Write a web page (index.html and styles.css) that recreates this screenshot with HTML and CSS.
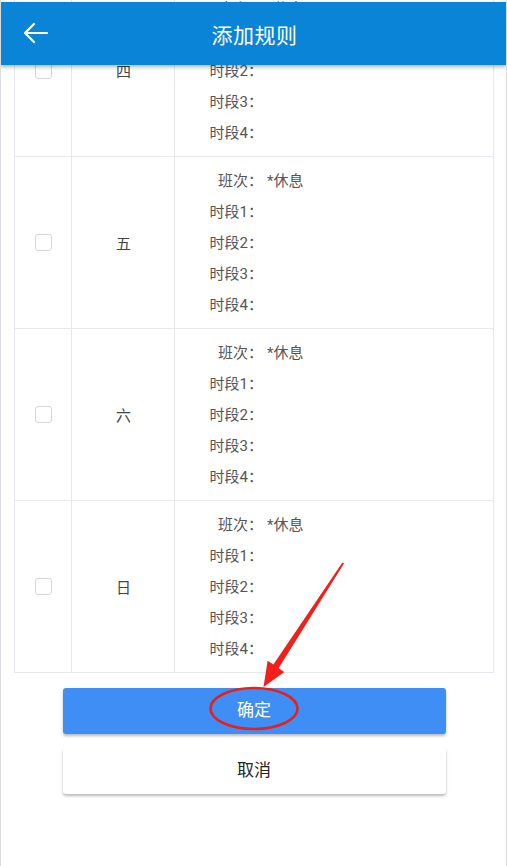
FILE: index.html
```html
<!DOCTYPE html>
<html lang="zh">
<head>
<meta charset="utf-8">
<title>添加规则</title>
<link rel="stylesheet" href="styles.css">
</head>
<body>
<div class="page">
  <header class="appbar">
    <svg class="back" width="26" height="22" viewBox="0 0 26 22"><path d="M24 11H3M11 2L2 11l9 9" fill="none" stroke="#fff" stroke-width="2.2" stroke-linecap="round" stroke-linejoin="round"/></svg>
    <h1 class="title">添加规则</h1>
  </header>
  <main class="content">
    <div class="table">
      <div class="row">
        <div class="cell check"><span class="box"></span></div>
        <div class="cell day">四</div>
        <div class="cell info">
          <div class="line"><span class="label">班次：</span><span class="val">*休息</span></div>
          <div class="line"><span class="label">时段1：</span></div>
          <div class="line"><span class="label">时段2：</span></div>
          <div class="line"><span class="label">时段3：</span></div>
          <div class="line"><span class="label">时段4：</span></div>
        </div>
      </div>
      <div class="row">
        <div class="cell check"><span class="box"></span></div>
        <div class="cell day">五</div>
        <div class="cell info">
          <div class="line"><span class="label">班次：</span><span class="val">*休息</span></div>
          <div class="line"><span class="label">时段1：</span></div>
          <div class="line"><span class="label">时段2：</span></div>
          <div class="line"><span class="label">时段3：</span></div>
          <div class="line"><span class="label">时段4：</span></div>
        </div>
      </div>
      <div class="row">
        <div class="cell check"><span class="box"></span></div>
        <div class="cell day">六</div>
        <div class="cell info">
          <div class="line"><span class="label">班次：</span><span class="val">*休息</span></div>
          <div class="line"><span class="label">时段1：</span></div>
          <div class="line"><span class="label">时段2：</span></div>
          <div class="line"><span class="label">时段3：</span></div>
          <div class="line"><span class="label">时段4：</span></div>
        </div>
      </div>
      <div class="row">
        <div class="cell check"><span class="box"></span></div>
        <div class="cell day">日</div>
        <div class="cell info">
          <div class="line"><span class="label">班次：</span><span class="val">*休息</span></div>
          <div class="line"><span class="label">时段1：</span></div>
          <div class="line"><span class="label">时段2：</span></div>
          <div class="line"><span class="label">时段3：</span></div>
          <div class="line"><span class="label">时段4：</span></div>
        </div>
      </div>
    </div>
    <div class="actions">
      <button class="btn primary">确定</button>
      <button class="btn plain">取消</button>
    </div>
  </main>
  <svg class="annot" width="507" height="866" viewBox="0 0 507 866">
    <polygon points="263.5,687 267.6,660.8 273.4,664.6 342.4,562.5 344,563.5 278.6,668.2 284.4,672" fill="#f0211b"/>
    <ellipse cx="254" cy="708.5" rx="43.5" ry="20.5" fill="none" stroke="#e8201a" stroke-width="2.6"/>
  </svg>
</div>
</body>
</html>
```

FILE: styles.css
```css
html, body {
  margin: 0;
  padding: 0;
  background: #fff;
}
body {
  font-family: Roboto, "Noto Sans CJK SC", sans-serif;
  overflow: hidden;
}
.page {
  position: relative;
  height: 866px;
  border-left: 1px solid #dcdcdc;
  border-right: 1px solid #dcdcdc;
  box-sizing: border-box;
  overflow: hidden;
}
.appbar {
  position: absolute;
  top: 2px;
  left: -1px;
  right: -1px;
  height: 63px;
  background: #0a84d6;
  box-shadow: 0 2px 4px rgba(0,0,0,0.3);
  display: flex;
  align-items: center;
  justify-content: center;
  z-index: 2;
}
.back {
  position: absolute;
  left: 23px;
  top: 20px;
}
.title {
  margin: 0;
  color: #fff;
  font-size: 21px;
  font-weight: 400;
  letter-spacing: 0.5px;
  padding-left: 2px;
}
.content {
  margin-top: -15px;
}
.table {
  margin: 0 12px 0 13px;
  border: 1px solid #e6e8ee;
  border-top: none;
}
.row {
  display: grid;
  grid-template-columns: 57px 103px 1fr;
  border-bottom: 1px solid #e6e8ee;
}
.row:last-child {
  border-bottom: none;
}
.cell {
  border-right: 1px solid #e6e8ee;
}
.cell:last-child {
  border-right: none;
}
.check {
  display: flex;
  align-items: center;
  justify-content: center;
}
.box {
  width: 15px;
  height: 15px;
  border: 1px solid #d6d6d6;
  border-radius: 3px;
  background: #fff;
}
.day {
  display: flex;
  align-items: center;
  justify-content: center;
  font-size: 15px;
  color: #444;
  padding-left: 1px;
}
.info {
  padding: 9px 0 7px 34px;
  font-size: 15px;
  color: #555;
}
.line {
  height: 31px;
  line-height: 31px;
  display: flex;
}
.label {
  width: 54px;
  text-align: right;
  white-space: nowrap;
}
.val {
  margin-left: 4px;
}
.actions {
  display: flex;
  flex-direction: column;
  align-items: center;
  gap: 14px;
  padding-top: 15px;
}
.btn {
  width: 383px;
  height: 46px;
  border: none;
  border-radius: 3px;
  font-family: Roboto, "Noto Sans CJK SC", sans-serif;
  font-size: 17px;
  line-height: 44px;
  box-shadow: 0 2px 3px rgba(0,0,0,0.28);
  padding: 0 0 2px;
  margin-left: 1px;
}
.primary {
  background: #3f8ef6;
  color: #fff;
}
.plain {
  background: #fff;
  color: #222;
}
.annot {
  position: absolute;
  left: -1px;
  top: 0;
  pointer-events: none;
  z-index: 3;
}
```
